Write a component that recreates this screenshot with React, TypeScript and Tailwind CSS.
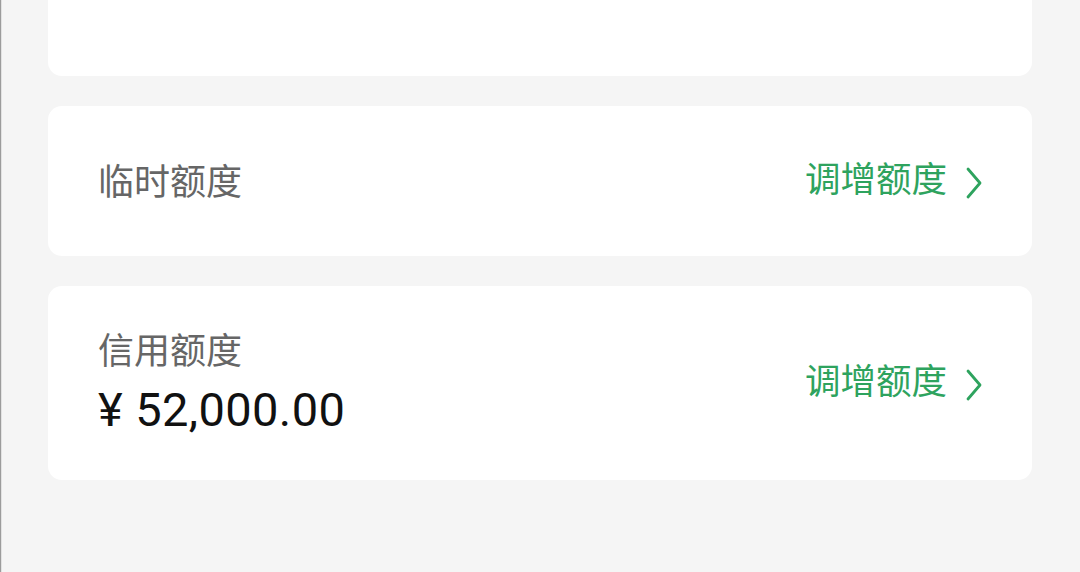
const cjk = { fontFamily: 'Roboto, "Noto Sans CJK SC", sans-serif' };

function RaiseLink() {
  return (
    <button className="flex items-center gap-[19px] text-[#2ea35e] text-[35.5px] leading-none">
      <span>调增额度</span>
      <svg width="16" height="32" viewBox="0 0 16 32" fill="none" className="mt-[3px]">
        <path d="M2 2 L14 16 L2 30" stroke="currentColor" strokeWidth="2.8" strokeLinecap="round" strokeLinejoin="round" />
      </svg>
    </button>
  );
}

export default function App() {
  return (
    <div className="h-[572px] w-[1080px] overflow-hidden bg-[#f5f5f5] border-l border-[#9c9c9c]" style={cjk}>
      <div className="h-full border-l border-[#e2e2e2] pl-[46px] pr-[48px] flex flex-col gap-[30px]">
        <div className="h-[76px] bg-white rounded-b-[14px]" />

        <div className="h-[150px] bg-white rounded-[14px] pl-[50px] pr-[50px] flex items-center justify-between">
          <span className="text-[36px] text-[#666666] leading-none mt-[4px]">临时额度</span>
          <RaiseLink />
        </div>

        <div className="h-[194px] bg-white rounded-[14px] pl-[50px] pr-[50px] flex items-center justify-between">
          <div className="flex flex-col gap-[13px] mt-[1px]">
            <span className="text-[36px] text-[#666666] leading-[40px]">信用额度</span>
            <span className="text-[47px] text-[#111111] leading-[50px] tracking-[0.4px]">¥ 52,000.00</span>
          </div>
          <RaiseLink />
        </div>
      </div>
    </div>
  );
}
